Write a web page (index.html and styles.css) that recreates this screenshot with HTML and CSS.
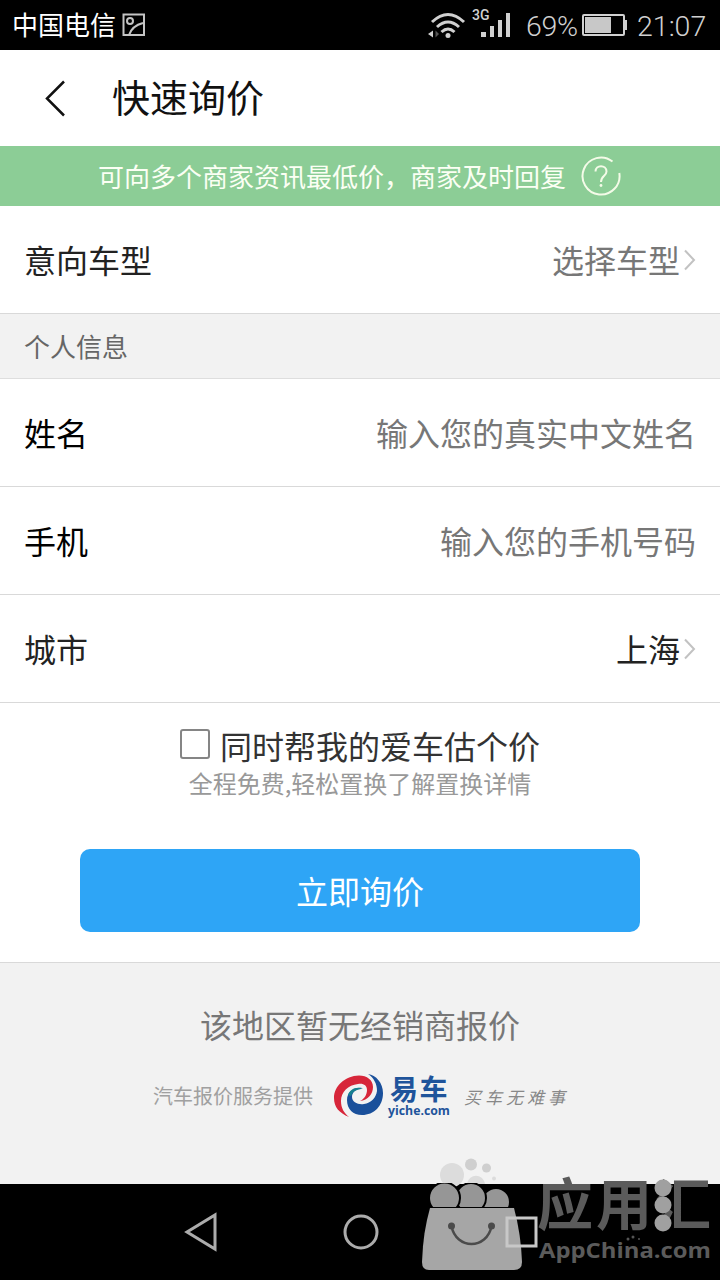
FILE: index.html
```html
<!DOCTYPE html>
<html lang="zh-CN">
    <head>
        <meta charset="utf-8">
        <title>快速询价</title>
        <link rel="stylesheet" href="styles.css">
    </head>
    <body>
        <div class="status">
            <span class="carrier">中国电信</span>
            <svg class="shot" width="24" height="24" viewBox="0 0 24 24" fill="none" stroke="#c4c4c4" stroke-width="2">
                <rect x="1.5" y="1.5" width="20.5" height="20.5"/>
                <circle cx="8" cy="8" r="3"/>
                <path d="M7 22C9 16 13 12 21 10"/>
            </svg>
            <svg class="wifi" width="40" height="32" viewBox="0 0 40 32" fill="none" stroke="#d0d0d0" stroke-width="3">
                <path d="M5 13Q21 -2 37 13M10 18Q21 8 32 18M14.500 23Q21 17 27.500 23"/>
                <circle cx="21" cy="26.500" r="2.500" fill="#d0d0d0" stroke="none"/>
                <path d="M6 21.500V28.500L1 25z" fill="#d0d0d0" stroke="none"/>
                <path d="M8.500 21.500V28.500L12 25z" fill="#555" stroke="none"/>
            </svg>
            <div class="signal">
                <span class="net">3G</span>
                <svg width="30" height="26" viewBox="0 0 30 26" fill="#d0d0d0">
                    <rect x="0" y="20" width="5" height="5"/>
                    <rect x="9" y="14" width="4" height="11"/>
                    <rect x="17" y="8" width="4" height="17"/>
                    <rect x="25" y="1" width="4" height="24"/>
                </svg>
            </div>
            <span class="percent">69%</span>
            <svg class="battery" width="46" height="24" viewBox="0 0 46 24">
                <rect x="1" y="2" width="41" height="20" rx="1" fill="none" stroke="#d0d0d0" stroke-width="2"/>
                <rect x="3" y="4" width="26" height="16" fill="#c8c8c8"/>
                <rect x="42" y="7" width="3" height="10" fill="#d0d0d0"/>
            </svg>
            <span class="clock">21:07</span>
        </div>

        <div class="header">
            <svg width="24" height="40" viewBox="0 0 24 40" fill="none" stroke="#111" stroke-width="2.500">
                <path d="M20 3.500L3 20.500L20 37.500"/>
            </svg>
            <h1>快速询价</h1>
        </div>

        <div class="banner">
            <span>可向多个商家资讯最低价，商家及时回复</span>
            <svg width="40" height="40" viewBox="0 0 40 40" fill="none" stroke="#f4fbe8" stroke-width="2">
                <path d="M31.500 5.500A18.500 18.500 0 1 0 38.300 17"/>
                <path d="M14.500 15.500C14.500 8.500 25.500 8.500 25.500 15.500C25.500 20 20 19.500 20 26"/>
                <circle cx="20" cy="29.500" r="1.400" fill="#f4fbe8" stroke="none"/>
            </svg>
        </div>

        <div class="row">
            <span class="label soft">意向车型</span>
            <span class="value">选择车型</span>
            <svg class="arrow" width="14" height="24" viewBox="0 0 14 24" fill="none" stroke="#c2c2c2" stroke-width="2">
                <path d="M3 2.500L12 12L3 21.500"/>
            </svg>
        </div>
        <div class="section">个人信息</div>
        <div class="row">
            <span class="label">姓名</span>
            <span class="value">输入您的真实中文姓名</span>
        </div>
        <div class="row">
            <span class="label">手机</span>
            <span class="value">输入您的手机号码</span>
        </div>
        <div class="row">
            <span class="label soft">城市</span>
            <span class="value dark">上海</span>
            <svg class="arrow" width="14" height="24" viewBox="0 0 14 24" fill="none" stroke="#c2c2c2" stroke-width="2">
                <path d="M3 2.500L12 12L3 21.500"/>
            </svg>
        </div>

        <div class="submit">
            <div class="check">
                <span class="box"></span>
                <span>同时帮我的爱车估个价</span>
            </div>
            <p class="hint">全程免费,轻松置换了解置换详情</p>
            <button type="button">立即询价</button>
        </div>

        <div class="footer">
            <p class="empty">该地区暂无经销商报价</p>
            <div class="provider">
                <span class="by">汽车报价服务提供</span>
                <svg class="swirl" width="54" height="46" viewBox="0 0 54 46">
                    <path d="M35 1C43 2 50 10 50 20C50 33 41 42 29 42C20 42 14 36 14 27C14 19 21 14 29 15C23 16 19 19 19 24C19 29 25 32 31 31C38 30 43 25 44 18C44 11 41 5 35 1z" fill="#1a509b"/>
                    <path d="M16 44C6 40 1 34 1 25C1 13 12 3 26 2.500C34 2.500 40 7 40 14C40 21 35 27 27 28C31 26 34 22 34 17C34 12 30 10 25 11C15 12 8 19 8 28C8 35 11 40 16 44z" fill="#d7263a"/>
                    <path d="M15 22C17 16 24 13 30 16C24 16 20 18 18 23z" fill="#17808f"/>
                </svg>
                <div class="brand">
                    <b>易车</b>
                    <span>yiche.com</span>
                </div>
                <span class="slogan">买车无难事</span>
            </div>
        </div>

        <div class="nav">
            <svg width="720" height="96" viewBox="0 0 720 96" fill="none" stroke="#acacac" stroke-width="3">
                <path d="M215 31V65L187 48z"/>
                <circle cx="361" cy="48" r="16"/>
            </svg>
        </div>

        <svg class="mark" width="300" height="124" viewBox="0 0 300 124">
            <defs>
                <clipPath id="rim">
                    <rect x="0" y="27" width="110" height="24"/>
                </clipPath>
            </defs>
            <g fill="#dcdcdc">
                <circle cx="32" cy="19" r="12"/>
                <circle cx="51" cy="8.500" r="6" fill="#cfcfcf"/>
                <circle cx="66.500" cy="12" r="4.500" fill="#cfcfcf"/>
                <circle cx="74" cy="22.500" r="2"/>
                <path d="M47 28C49 17 63 17 65 28z"/>
            </g>
            <g fill="#969696" stroke="#000" stroke-width="2" clip-path="url(#rim)">
                <circle cx="76" cy="46" r="14"/>
                <circle cx="51" cy="42" r="15"/>
                <circle cx="24.500" cy="42" r="15.500"/>
            </g>
            <path d="M10 52H94Q101 78 102 106Q102 114 94 114H9Q2 114 2 106Q3 76 10 52z" fill="#a6a6a6"/>
            <g fill="#4b4b4b">
                <circle cx="31.500" cy="70" r="3.500"/>
                <circle cx="71.500" cy="70" r="3.500"/>
                <path d="M31.500 70C36 94 67 94 71.500 70" fill="none" stroke="#4b4b4b" stroke-width="2.500"/>
            </g>
            <rect x="87" y="62" width="29" height="28" fill="none" stroke="#c8c8c8" stroke-width="3"/>
            <text class="mark-cn" x="117" y="69" textLength="174">应用汇</text>
            <g fill="#a0a0a0">
                <circle cx="243" cy="32" r="8.500"/>
                <circle cx="243" cy="49" r="8.500"/>
                <circle cx="243" cy="67" r="8.500"/>
            </g>
            <g fill="#555">
                <circle cx="208" cy="83" r="1.500"/>
                <circle cx="213" cy="81" r="1.500"/>
                <circle cx="219" cy="83" r="1"/>
            </g>
            <text class="mark-en" x="119" y="102" textLength="172" lengthAdjust="spacingAndGlyphs">AppChina.com</text>
        </svg>
    </body>
</html>
```
FILE: styles.css
```css
* {
    box-sizing: border-box;
}

body {
    margin: 0;
    width: 720px;
    height: 1280px;
    position: relative;
    overflow: hidden;
    background: #fff;
    font-family: "Noto Sans CJK SC", sans-serif;
}

h1, p {
    margin: 0;
    font-weight: normal;
}

svg {
    display: block;
    flex: none;
}

.status {
    display: flex;
    align-items: center;
    height: 50px;
    padding: 0 12px;
    background: #000;
    color: #d0d0d0;
    font-family: Roboto, sans-serif;
    font-size: 28px;
}

.carrier {
    padding-bottom: 3px;
    color: #fff;
    font-family: "Noto Sans CJK SC", sans-serif;
    font-size: 26px;
}

.shot {
    margin-left: 6px;
}

.wifi {
    margin: 0 2px 0 281px;
}

.signal {
    position: relative;
    margin-left: 12px;
}

.net {
    position: absolute;
    left: -9px;
    top: -5px;
    font-size: 14px;
    font-weight: 500;
}

.percent {
    margin-left: 15px;
    padding-top: 2px;
    width: 53px;
    font-weight: 300;
    font-size: 28.5px;
    letter-spacing: -0.3px;
}

.battery {
    margin-left: 3px;
}

.clock {
    margin-left: 9px;
    padding-top: 2px;
    font-size: 28.5px;
    font-weight: 300;
}

.header {
    display: flex;
    align-items: center;
    gap: 44px;
    height: 96px;
    padding-left: 44px;
}

.header h1 {
    padding-bottom: 4px;
    color: #111;
    font-size: 38px;
    line-height: 92px;
}

.banner {
    display: flex;
    align-items: center;
    justify-content: center;
    gap: 15px;
    height: 60px;
    padding-right: 1px;
    background: #8ccd96;
    color: #fbfff4;
    font-size: 26px;
}

.banner span {
    padding-bottom: 2px;
}

.row {
    display: flex;
    align-items: center;
    height: 108px;
    padding: 0 24px;
    border-bottom: 1px solid #d9d9d9;
    font-size: 32px;
}

.label, .value {
    padding-bottom: 2px;
}

.label {
    flex: 1;
    color: #000;
}

.soft {
    color: #222;
}

.value {
    color: #777;
}

.value.dark {
    color: #222;
}

.arrow {
    margin-left: 2px;
}

.section {
    height: 65px;
    padding-left: 24px;
    border-bottom: 1px solid #dedede;
    background: #f2f2f2;
    color: #666;
    font-size: 26px;
    line-height: 64px;
}

.submit {
    display: flex;
    flex-direction: column;
    align-items: center;
    height: 260px;
    padding-top: 18px;
    border-bottom: 1px solid #d9d9d9;
}

.check {
    display: flex;
    align-items: center;
    gap: 10px;
    height: 48px;
    color: #333;
    font-size: 32px;
}

.box {
    width: 30px;
    height: 30px;
    margin-top: -2px;
    border: 2px solid #858585;
    border-radius: 3px;
}

.hint {
    height: 28px;
    color: #999;
    font-size: 24px;
    line-height: 28px;
}

.submit button {
    width: 560px;
    height: 83px;
    margin-top: 52px;
    padding: 0 0 2px;
    border: 0;
    border-radius: 10px;
    background: #2ea5f6;
    color: #fff;
    font-family: inherit;
    font-size: 32px;
}

.footer {
    height: 221px;
    padding-top: 36px;
    background: #f2f2f2;
}

.empty {
    color: #777;
    font-size: 32px;
    line-height: 50px;
    text-align: center;
}

.provider {
    display: flex;
    align-items: center;
    height: 46px;
    margin-top: 24px;
    padding-left: 153px;
}

.by {
    padding-bottom: 1px;
    color: #a0a0a0;
    font-size: 20px;
}

.swirl {
    margin-left: 20px;
}

.brand {
    display: flex;
    flex-direction: column;
    width: 62px;
    margin-left: 1px;
    color: #1f549b;
}

.brand b {
    margin-left: 2px;
    font-size: 28px;
    font-weight: bold;
    letter-spacing: 1.5px;
    line-height: 26px;
}

.brand span {
    padding-top: 3px;
    font-family: "Open Sans", sans-serif;
    font-size: 12.3px;
    font-weight: bold;
    line-height: 14px;
}

.slogan {
    margin-left: 14px;
    color: #888;
    font-size: 17px;
    font-style: italic;
    letter-spacing: 4px;
}

.nav {
    height: 96px;
    background: #000;
}

.mark {
    position: absolute;
    left: 420px;
    top: 1156px;
}

.mark-cn {
    fill: #5b5b5b;
    font-size: 56px;
    font-weight: bold;
}

.mark-en {
    fill: #5b5b5b;
    font-family: "Open Sans", sans-serif;
    font-size: 22px;
    font-weight: bold;
}
```
